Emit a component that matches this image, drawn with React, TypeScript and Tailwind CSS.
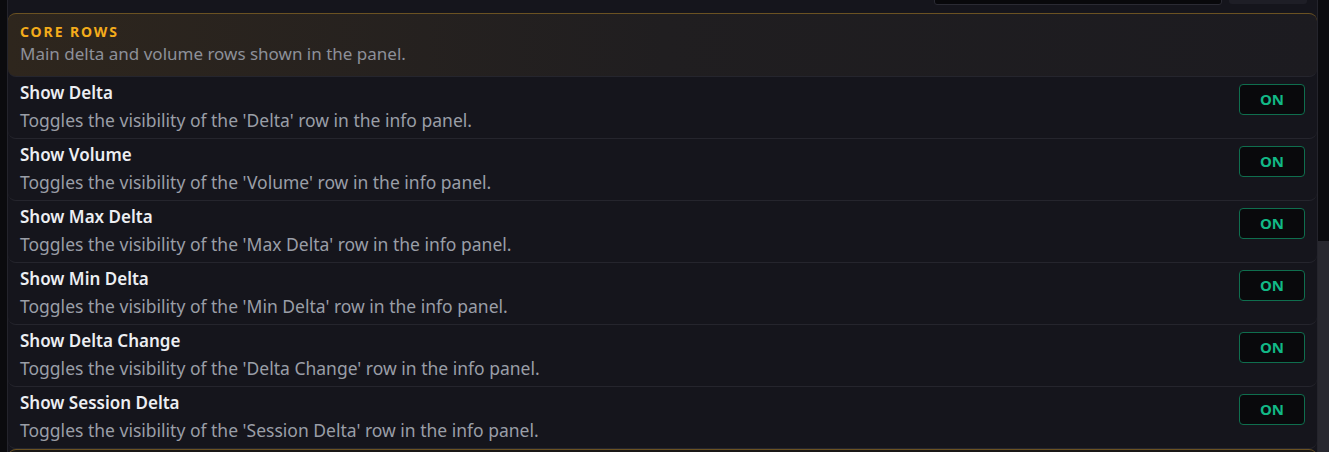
import React from 'react'

const rows = [
  { title: 'Show Delta', name: 'Delta' },
  { title: 'Show Volume', name: 'Volume' },
  { title: 'Show Max Delta', name: 'Max Delta' },
  { title: 'Show Min Delta', name: 'Min Delta' },
  { title: 'Show Delta Change', name: 'Delta Change' },
  { title: 'Show Session Delta', name: 'Session Delta' },
]

function Toggle() {
  return (
    <button className="w-[66px] h-[31px] rounded-[4px] border border-[#0f6e4e] bg-[#09090c] text-[15px] font-bold text-[#12b886] leading-none">
      ON
    </button>
  )
}

export default function App() {
  return (
    <div className="h-[452px] w-full overflow-hidden flex bg-[#0c0c10]" style={{ fontFamily: '"Noto Sans", "Open Sans", sans-serif' }}>
      <div className="w-[7px] shrink-0 bg-[#0b0b0e]" />
      <div className="flex-1 flex flex-col bg-[#15151c] border-l border-r border-[#24242c]">
        {/* tail of the previous block, scrolled out of view */}
        <div className="h-[13px] shrink-0 flex justify-end items-start gap-[7px] pr-[10px]">
          <div className="w-[288px] h-[6px] -mt-px bg-[#08080b] border border-[#2a2a33] rounded-b-[3px]" />
          <div className="w-[78px] h-[4px] bg-[#1e1e26] rounded-b-[3px]" />
        </div>

        <div className="shrink-0 h-[64px] rounded-lg border-t border-[#6b5222] bg-gradient-to-r from-[#2e261d] via-[#201e20] to-[#1c1b20] px-3 pt-[8px] border-b border-b-[#25252d]">
          <div className="text-[14px] leading-[20px] font-bold tracking-[1.9px] text-[#f4ac1b]">CORE ROWS</div>
          <div className="text-[17px] leading-[24px] text-[#8d9099]">Main delta and volume rows shown in the panel.</div>
        </div>

        {rows.map((r) => (
          <div key={r.title} className="shrink-0 flex items-start justify-between rounded-lg border-b border-[#25252d] pl-3 pr-[12px] pt-[4px] h-[62px]">
            <div className="flex flex-col gap-[4px]">
              <div className="text-[17px] leading-[23px] font-semibold text-[#eceef2]">{r.title}</div>
              <div className="text-[17.5px] leading-[24px] text-[#9a9ea7]">Toggles the visibility of the '{r.name}' row in the info panel.</div>
            </div>
            <div className="pt-[3px]">
              <Toggle />
            </div>
          </div>
        ))}

        <div className="shrink-0 rounded-lg border-t border-[#6b5222] h-[20px] bg-[#1a1816]" />
      </div>
      <div className="w-[11px] shrink-0 flex flex-col bg-[#0b0b0f]">
        <div className="h-[241px] shrink-0" />
        <div className="flex-1 bg-[#28282f]" />
      </div>
    </div>
  )
}
